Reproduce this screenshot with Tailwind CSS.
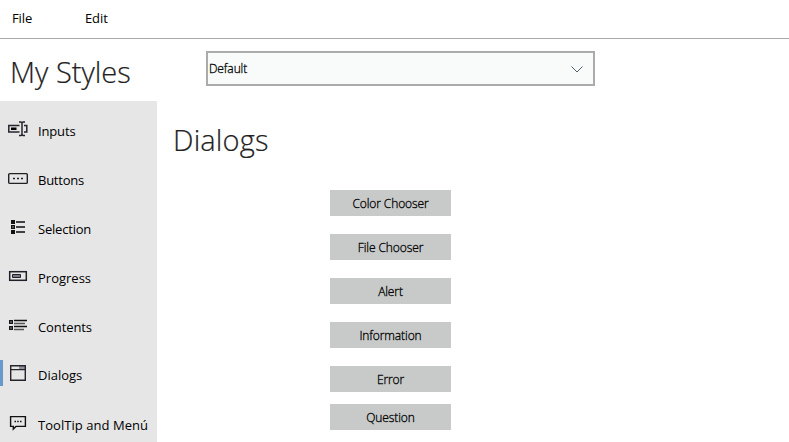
<!DOCTYPE html>
<html lang="en">
<head>
<meta charset="utf-8">
<title>My Styles</title>
<script src="https://cdn.jsdelivr.net/npm/@tailwindcss/browser@4"></script>
</head>
<body class="flex h-[442px] w-[789px] flex-col overflow-hidden bg-white font-['Open_Sans','Noto_Sans',sans-serif] text-black">
<nav class="flex h-[39px] shrink-0 items-center gap-[53px] border-b border-[#a9a9a9] pb-[2px] pl-3 text-[13px] leading-none tracking-[-0.1px]">
  <span class="w-5 whitespace-nowrap">File</span><span>Edit</span>
</nav>
<header class="flex h-[50px] shrink-0">
  <h1 class="h-[50px] w-[206px] pt-[13px] pl-[10px] text-[29px] leading-[40px] font-light whitespace-nowrap text-[#222] [-webkit-text-stroke:0.2px_#222]">My Styles</h1>
  <div class="mt-3 flex h-[35px] w-[389px] items-center justify-between border-2 border-[#ababab] bg-[#f8fbfa] pr-[10px] pl-px">
    <span class="text-[12px] font-light tracking-[-0.1px] [-webkit-text-stroke:0.3px_#000]">Default</span>
    <svg class="h-3 w-3" viewBox="0 0 12 12" fill="none" stroke="#52606b"><path d="M.5 3.500 6 9l5.500-5.500"/></svg>
  </div>
</header>
<div class="mt-3 flex min-h-0 grow">
  <aside class="w-[157px] shrink-0 overflow-hidden bg-[#e6e6e6] pt-[5px] text-[13px] leading-none">
    <div class="flex h-[49px] items-center gap-[10px] pl-2">
      <svg class="h-[21px] w-5 shrink-0" viewBox="0 0 20 21" fill="none" stroke="#24242c" stroke-width="1.500"><path d="M11.500 5.500H.8v6.500h10.700M16 5.500h2.800v6.500H16M11 2H13l1 1 1-1h2M11 15.500H13l1-1 1 1h2M14 3v12"/><path d="M3 7.500h5.500v2.500H3z" fill="#000" stroke="none"/></svg>
      <span class="pt-[2px] tracking-[-0.15px]">Inputs</span>
    </div>
    <div class="flex h-[49px] items-center gap-[10px] pl-2">
      <svg class="h-[21px] w-5 shrink-0" viewBox="0 0 20 21" fill="none" stroke="#202026" stroke-width="1.400"><rect x=".7" y="4.600" width="18.600" height="9.800" rx="1"/><path d="M5 9.500h2M9 9.500h2M13 9.500h2" stroke-width="1.600"/></svg>
      <span class="pt-[2px] tracking-[-0.25px]">Buttons</span>
    </div>
    <div class="flex h-[49px] items-center gap-[10px] pl-2">
      <svg class="h-[21px] w-5 shrink-0" viewBox="0 0 20 21"><path d="M3 2h4v4H3zM3 7h4v4H3zM3 12h4v4H3z" fill="#111"/><path d="M4.200 8.200h1.600v1.600H4.200z" fill="#777"/><path d="M8 4h9M8 9h9M8 14h9" stroke="#404045" stroke-width="1.800"/></svg>
      <span class="pt-[2px] tracking-[-0.2px]">Selection</span>
    </div>
    <div class="flex h-[49px] items-center gap-[10px] pl-2">
      <svg class="h-[21px] w-5 shrink-0" viewBox="0 0 20 21"><rect x="1.700" y="4.700" width="16.600" height="8.600" fill="none" stroke="#202028" stroke-width="1.500"/><path d="M4.500 7.500h8v3h-8z" fill="#777a86" stroke="#202028"/></svg>
      <span class="pt-[2px]">Progress</span>
    </div>
    <div class="flex h-[49px] items-center gap-[10px] pl-2">
      <svg class="h-[21px] w-5 shrink-0" viewBox="0 0 20 21"><path d="M1.600 4.600h2.800v2.800H1.600zM1.600 10.600h2.800v2.800H1.600z" fill="#777" stroke="#17171b" stroke-width="1.200"/><path d="M6 4.500h13M6 10.500h13" stroke="#111" stroke-width="1.300"/><path d="M6 7.500h11M6 13.500h10" stroke="#555" stroke-width="1.400"/></svg>
      <span class="pt-[2px] tracking-[-0.1px]">Contents</span>
    </div>
    <div class="flex h-[48px] items-center">
      <span class="-mt-1 h-[26px] w-[3px] bg-[#6699cc]"></span>
      <svg class="mr-[10px] ml-[5px] h-[21px] w-5 shrink-0" viewBox="0 0 20 21"><path d="M11 1h6v3h-6z" fill="#92929a"/><path d="M2.700.700h14.600v14.600H2.700zM2 4.600h16" fill="none" stroke="#24242c" stroke-width="1.400"/></svg>
      <span>Dialogs</span>
    </div>
    <div class="flex h-[50px] items-center gap-[10px] pl-2">
      <svg class="h-[21px] w-5 shrink-0" viewBox="0 0 20 21" fill="none" stroke="#111" stroke-width="1.400"><path d="M2.600 2.600h14.800v9.800H8l-2.700 2.600v-2.600H2.600z"/><path d="M6.500 7.500h1.500M9.200 7.500h1.500M12 7.500h1.500"/></svg>
      <span class="pt-[3px] tracking-[0.05px] whitespace-nowrap">ToolTip and Menú</span>
    </div>
  </aside>
  <main class="grow">
    <h2 class="ml-4 h-[89px] pt-[19px] text-[29px] leading-[40px] font-light tracking-[0.15px] text-[#222] [-webkit-text-stroke:0.2px_#222]">Dialogs</h2>
    <div class="ml-[173px] flex w-[121px] flex-col text-[12px] leading-none font-light tracking-[-0.1px] [-webkit-text-stroke:0.3px_#000]">
      <button class="mb-[18px] h-[26px] bg-[#c8cac9] pt-px">Color Chooser</button>
      <button class="mb-[18px] h-[26px] bg-[#c8cac9] pt-px">File Chooser</button>
      <button class="mb-[18px] h-[26px] bg-[#c8cac9] pt-px">Alert</button>
      <button class="mb-[18px] h-[26px] bg-[#c8cac9] pt-px">Information</button>
      <button class="mb-3 h-[26px] bg-[#c8cac9] pt-px">Error</button>
      <button class="h-[26px] bg-[#c8cac9] pt-px">Question</button>
    </div>
  </main>
</div>
</body>
</html>
